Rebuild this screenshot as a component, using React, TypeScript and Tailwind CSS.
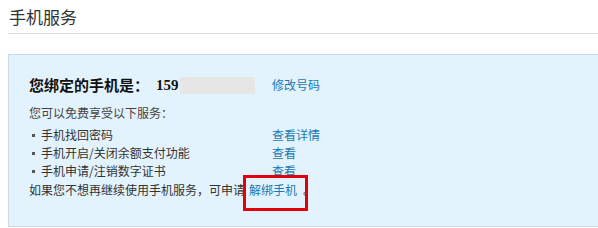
import React from "react";

const font = { fontFamily: '"Noto Sans CJK SC", "Liberation Sans", sans-serif' };

export default function App() {
  const items = [
    { t: "手机找回密码", l: "查看详情" },
    { t: "手机开启/关闭余额支付功能", l: "查看" },
    { t: "手机申请/注销数字证书", l: "查看" },
  ];
  return (
    <div className="relative w-[598px] h-[228px] bg-white overflow-hidden" style={font}>
      <div className="pl-[9px] pt-[6px] h-[33px] text-[17px] leading-[22px] text-[#333]">手机服务</div>
      <div className="ml-[8px] h-px bg-[#dcdcdc]" />
      <div className="mt-[20px] ml-[8px] h-[173px] bg-[#e3f3fd] border-t border-l border-b border-[#c7dbe8] pl-[20px] pt-[21px] text-[12px] text-[#333]">
        <div className="flex items-center h-[18px]">
          <div className="w-[243px] flex items-center">
            <span className="text-[15px] font-bold text-[#111] leading-[18px]">您绑定的手机是：</span>
            <span className="ml-[7px] text-[15px] font-bold text-[#111] leading-[18px]" style={{ fontFamily: '"Liberation Serif", serif' }}>159</span>
            <span className="ml-[1px] w-[75px] h-[17px] bg-[#e6e6e6]" />
          </div>
          <span className="text-[#1a78b4] leading-[18px]">修改号码</span>
        </div>
        <div className="mt-[10px] h-[18px] leading-[18px] text-[#444]">您可以免费享受以下服务：</div>
        <div className="mt-[4px]">
          {items.map((it) => (
            <div key={it.t} className="flex items-center h-[18px] leading-[18px]">
              <div className="w-[243px] flex items-center">
                <span className="ml-[3px] w-[3px] h-[3px] bg-[#555]" />
                <span className="ml-[6px]">{it.t}</span>
              </div>
              <span className="text-[#1a78b4]">{it.l}</span>
            </div>
          ))}
        </div>
        <div className="mt-[1px] h-[18px] leading-[18px]">
          如果您不想再继续使用手机服务，可申请<span className="ml-[4px] text-[#1a78b4]">解绑手机</span>
          <span className="ml-[6px]">。</span>
        </div>
      </div>
      <div className="absolute left-[243px] top-[175px] w-[65px] h-[36px] border-[3px] border-[#e3000b]" />
    </div>
  );
}
